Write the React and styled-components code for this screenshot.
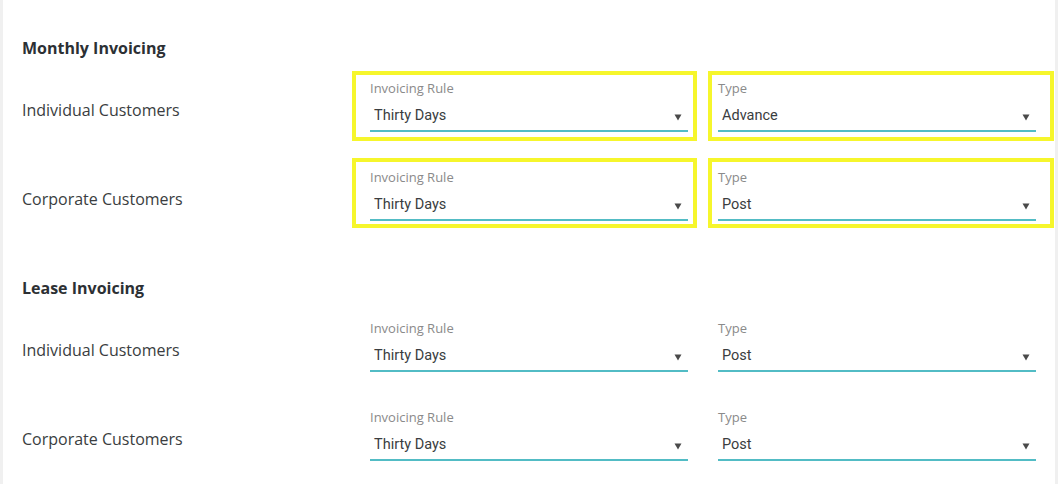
import { createGlobalStyle, styled } from "styled-components";

const COLORS = {
  page: "#f0f0f0",
  text: "#3a3d40",
  heading: "#2c3034",
  muted: "#8a8a8a",
  accent: "#52bcc5",
  highlight: "#f6f62c",
};

const sections = [
  {
    title: "Monthly Invoicing",
    rows: [
      {
        name: "Individual Customers",
        rule: "Thirty Days",
        type: "Advance",
        marks: [
          { top: -9, right: -9, bottom: -9, left: -18 },
          { top: -9, right: -18, bottom: -9, left: -10 },
        ],
      },
      {
        name: "Corporate Customers",
        rule: "Thirty Days",
        type: "Post",
        marks: [
          { top: -11, right: -9, bottom: -7, left: -18 },
          { top: -11, right: -18, bottom: -7, left: -10 },
        ],
      },
    ],
  },
  {
    title: "Lease Invoicing",
    rows: [
      { name: "Individual Customers", rule: "Thirty Days", type: "Post" },
      { name: "Corporate Customers", rule: "Thirty Days", type: "Post" },
    ],
  },
];

const Caret = () => (
  <svg width="8" height="7" viewBox="0 0 8 7">
    <path d="M0.5 0.5 L7.5 0.5 L4 6.5 Z" fill="#4a4a4a" />
  </svg>
);

const SelectField = ({ label, value, mark }) => (
  <Field $mark={mark}>
    <FieldLabel>{label}</FieldLabel>
    <FieldControl>
      <span>{value}</span>
      <Caret />
    </FieldControl>
  </Field>
);

const App = () => {
  return (
    <>
      <GlobalStyle />
      <Panel>
        {sections.map((section) => (
          <Section key={section.title}>
            <Heading>{section.title}</Heading>
            <Rows>
              {section.rows.map((row) => (
                <Row key={row.name}>
                  <RowLabel>{row.name}</RowLabel>
                  <SelectField label="Invoicing Rule" value={row.rule} mark={row.marks && row.marks[0]} />
                  <SelectField label="Type" value={row.type} mark={row.marks && row.marks[1]} />
                </Row>
              ))}
            </Rows>
          </Section>
        ))}
      </Panel>
    </>
  );
};

const GlobalStyle = createGlobalStyle`
body {
  margin: 0;
  background: ${COLORS.page};
  font-family: "Open Sans", "Liberation Sans", sans-serif;
}
`
const Panel = styled.div`
margin: 0 3px;
min-height: 484px;
background: #fff;
padding: 38px 19px 0;
box-sizing: border-box;
display: flex;
flex-direction: column;
gap: 57px;
`
const Section = styled.section`
display: flex;
flex-direction: column;
gap: 22px;
`
const Heading = styled.h2`
margin: 0;
font-size: 16px;
line-height: 20px;
font-weight: 700;
color: ${COLORS.heading};
`
const Rows = styled.div`
display: flex;
flex-direction: column;
gap: 37px;
`
const Row = styled.div`
display: grid;
grid-template-columns: 318px 318px 318px;
column-gap: 30px;
align-items: center;
`
const RowLabel = styled.div`
font-size: 16px;
line-height: 20px;
color: ${COLORS.text};
padding-top: 7px;
`
const Field = styled.div`
position: relative;
display: flex;
flex-direction: column;
gap: 10px;

${({ $mark }) => $mark && `
  &::after {
    content: "";
    position: absolute;
    top: ${$mark.top}px;
    right: ${$mark.right}px;
    bottom: ${$mark.bottom}px;
    left: ${$mark.left}px;
    border: 4px solid ${COLORS.highlight};
    pointer-events: none;
  }
`}
`
const FieldLabel = styled.div`
font-size: 13px;
line-height: 16px;
color: ${COLORS.muted};
`
const FieldControl = styled.div`
display: flex;
align-items: center;
justify-content: space-between;
padding: 0 6px 4px 4px;
border-bottom: 2px solid ${COLORS.accent};
font-family: Roboto, "Liberation Sans", sans-serif;
font-size: 14.5px;
line-height: 20px;
color: ${COLORS.text};

svg {
  margin-top: 2px;
}
`
export default App;
